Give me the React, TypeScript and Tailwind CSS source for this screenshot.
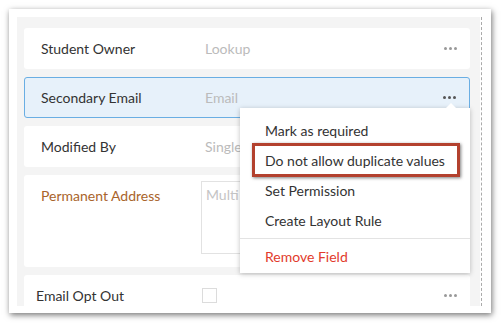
import { Fragment } from "react"

const font = { fontFamily: "Lato, 'Open Sans', sans-serif" }

function Dots({ dark }: { dark?: boolean }) {
  return (
    <div className="ml-auto mr-[13px] flex gap-[2px]">
      {[0, 1, 2].map((i) => (
        <span key={i} className={`h-[3px] w-[3px] rounded-full ${dark ? "bg-[#555]" : "bg-[#999]"}`} />
      ))}
    </div>
  )
}

const menuItems = ["Mark as required", "Do not allow duplicate values", "Set Permission", "Create Layout Rule"]

export default function App() {
  return (
    <div className="h-[323px] w-[502px] bg-white pl-[9px] pt-[9px]" style={font}>
      <div className="flex h-[304px] w-[482px] bg-white p-[8px] pr-[10px] shadow-[1px_2px_6px_rgba(0,0,0,0.55)]">
        <div className="relative h-[289px] w-[463px] shrink-0 overflow-hidden bg-[#f4f4f4] pl-[7px] pt-[11px]">
          <div className="flex w-[446px] flex-col gap-[8px] text-[14px]">
            <div className="flex h-[41px] items-center rounded-[3px] bg-white pl-[17px]">
              <span className="w-[164px] text-[#333]">Student Owner</span>
              <span className="text-[#bbb]">Lookup</span>
              <Dots />
            </div>
            <div className="flex h-[41px] items-center rounded-[3px] border border-[#6aaee3] bg-[#e7f1fa] pl-[16px]">
              <span className="w-[164px] text-[#333]">Secondary Email</span>
              <span className="text-[#bbb]">Email</span>
              <Dots dark />
            </div>
            <div className="flex h-[41px] items-center rounded-[3px] bg-white pl-[17px]">
              <span className="w-[164px] text-[#333]">Modified By</span>
              <span className="text-[#bbb]">Single Line</span>
              <Dots />
            </div>
            <div className="flex h-[92px] items-start rounded-[3px] bg-white pl-[17px] pt-[6px]">
              <span className="mt-[4px] w-[160px] text-[#a9642b]">Permanent Address</span>
              <div className="h-[73px] w-[200px] border border-[#e2e2e2] pl-[4px] pt-[2px] text-[#c4c4c4]">Multi Line</div>
            </div>
            <div className="flex h-[41px] items-center rounded-[3px] bg-white pl-[12px]">
              <span className="w-[166px] text-[#333]">Email Opt Out</span>
              <span className="h-[15px] w-[15px] border border-[#dcdcdc]" />
              <Dots />
            </div>
          </div>

          {/* context menu */}
          <div className="absolute left-[223px] top-[91px] w-[230px] bg-white pt-[7px] text-[14px] text-[#333] shadow-[0_1px_5px_rgba(0,0,0,0.25)]">
            <div className="absolute -top-[5px] right-[13px] h-0 w-0 border-x-[6px] border-b-[6px] border-x-transparent border-b-white" />
            {menuItems.map((item, i) => (
              <Fragment key={item}>
                <div className="relative flex h-[30px] items-center pl-[25px]">
                  {item}
                  {i === 1 && (
                    <div className="absolute -bottom-[2px] left-[12px] right-[10px] -top-[2px] border-[3px] border-[#b3412e] shadow-[1px_1px_3px_rgba(0,0,0,0.5)]" />
                  )}
                </div>
              </Fragment>
            ))}
            <div className="mt-[3px] flex h-[35px] items-center border-t border-[#e3e3e3] pl-[25px] text-[#e23b2c]">Remove Field</div>
          </div>
        </div>
        <div className="ml-[1px] h-[289px] border-l border-dashed border-[#aaa]" />
      </div>
    </div>
  )
}
